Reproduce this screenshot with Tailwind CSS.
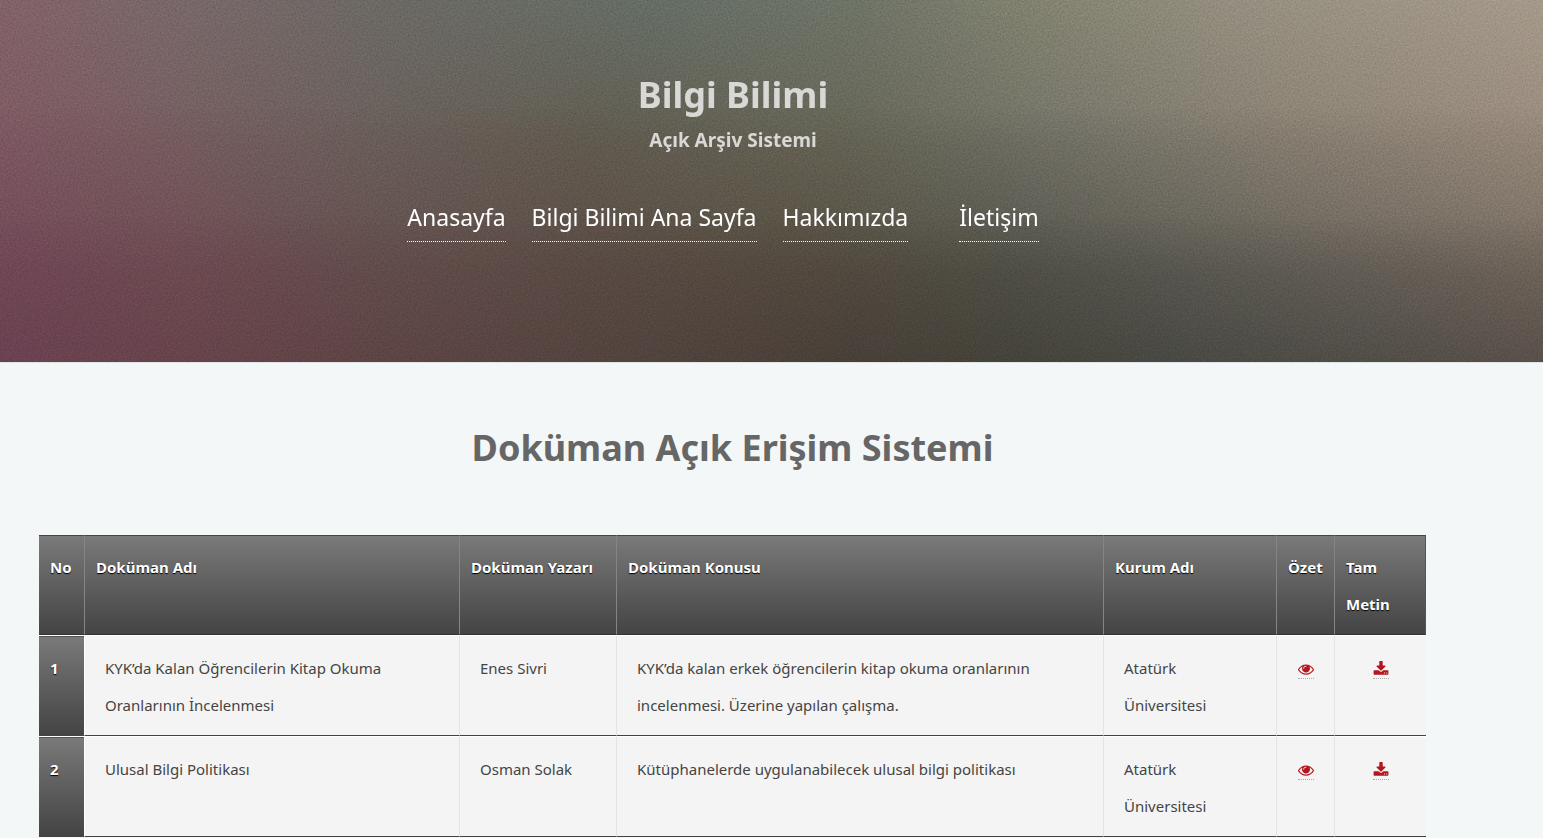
<!DOCTYPE html>
<html lang="tr">
<head>
<meta charset="utf-8">
<meta name="viewport" content="width=device-width, initial-scale=1">
<title>Bilgi Bilimi</title>
<script src="https://cdn.jsdelivr.net/npm/@tailwindcss/browser@4"></script>
</head>
<body class="bg-[#f3f7f8] font-['Noto_Sans','Open_Sans',sans-serif] text-[#444]">
<svg class="hidden" aria-hidden="true">
  <symbol id="eye" viewBox="0 0 1792 1792"><path d="M1664 960q-152-236-381-353 61 104 61 225 0 185-131.5 316.5t-316.5 131.5-316.5-131.5-131.5-316.5q0-121 61-225-229 117-381 353 133 205 333.5 326.5t434.5 121.5 434.5-121.5 333.5-326.5zm-720-384q0-20-14-34t-34-14q-125 0-214.5 89.5t-89.5 214.5q0 20 14 34t34 14 34-14 14-34q0-86 61-147t147-61q20 0 34-14t14-34zm848 384q0 34-20 69-140 230-376.5 368.5t-499.5 138.5-499.5-139-376.5-368q-20-35-20-69t20-69q140-229 376.5-368t499.5-139 499.5 139 376.5 368q20 35 20 69z"/></symbol>
  <symbol id="download" viewBox="0 0 1792 1792"><path d="M1344 1344q0-26-19-45t-45-19-45 19-19 45 19 45 45 19 45-19 19-45zm256 0q0-26-19-45t-45-19-45 19-19 45 19 45 45 19 45-19 19-45zm128-224v320q0 40-28 68t-68 28h-1472q-40 0-68-28t-28-68v-320q0-40 28-68t68-28h465l135 136q58 56 136 56t136-56l136-136h464q40 0 68 28t28 68zm-325-569q17 41-14 70l-448 448q-18 19-45 19t-45-19l-448-448q-31-29-14-70 17-39 59-39h256v-448q0-26 19-45t45-19h256q26 0 45 19t19 45v448h256q42 0 59 39z"/></symbol>
</svg>
<header class="relative isolate border-b border-[#dfe4e4] pt-[70px] pr-[77px] pb-[120px]">
  <!-- Blended horizontal colour bands form the header backdrop -->
  <div aria-hidden="true" class="absolute inset-0 -z-10 bg-[linear-gradient(to_right,#826269_0%,#786869_12%,#6c6964_25%,#656e65_42%,#6f7468_56%,#82826f_67%,#958f80_80%,#a5998a_100%)]"></div>
  <div aria-hidden="true" class="absolute inset-0 -z-10 bg-[linear-gradient(to_right,#7e5a63_0%,#765e60_12%,#6a605b_24%,#625c51_38%,#666657_55%,#75746a_68%,#8a8173_83%,#998b7d_100%)] mask-[linear-gradient(to_bottom,transparent_0%,black_40%)]"></div>
  <div aria-hidden="true" class="absolute inset-0 -z-10 bg-[linear-gradient(to_right,#724957_0%,#6e4d53_12%,#634f4d_25%,#5b4d46_38%,#564d41_52%,#54534a_65%,#5f5d55_77%,#6b645c_87%,#766c60_100%)] mask-[linear-gradient(to_bottom,transparent_30%,black_76%)]"></div>
  <div aria-hidden="true" class="absolute inset-0 -z-10 bg-[linear-gradient(to_right,#6a4151_0%,#67434b_12%,#5d4444_25%,#52433e_40%,#483f38_55%,#444239_65%,#484842_75%,#504d47_88%,#594f4a_100%)] mask-[linear-gradient(to_bottom,transparent_60%,black_100%)]"></div>
  <svg aria-hidden="true" class="absolute inset-0 -z-10 size-full opacity-15 mix-blend-overlay">
    <filter id="grain" color-interpolation-filters="sRGB"><feTurbulence type="fractalNoise" baseFrequency="0.6" numOctaves="2"/><feColorMatrix type="matrix" values="1 0 0 0 0  1 0 0 0 0  1 0 0 0 0  0 0 0 0 1"/></filter>
    <rect width="100%" height="100%" filter="url(#grain)"/>
  </svg>
  <div class="text-center font-bold text-[#d9d8d6]">
    <h1 class="text-[36px] leading-[50px]">Bilgi Bilimi</h1>
    <p class="mt-[4px] text-[19px] leading-[32px]">Açık Arşiv Sistemi</p>
  </div>
  <nav class="mt-[38px] flex justify-center gap-[26px] pr-[20px] text-[23px] leading-[47px] text-white">
    <a href="#" class="border-b border-dotted border-white">Anasayfa</a>
    <a href="#" class="border-b border-dotted border-white">Bilgi Bilimi Ana Sayfa</a>
    <a href="#" class="border-b border-dotted border-white">Hakkımızda</a>
    <a href="#" class="ml-[25px] border-b border-dotted border-white">İletişim</a>
  </nav>
</header>
<main class="pt-[57px] pr-[117px] pl-[39px]">
  <h2 class="text-center text-[36px] leading-[56px] font-bold text-[#666]">Doküman Açık Erişim Sistemi</h2>
  <table class="mt-[59px] w-full table-fixed border-separate border-spacing-0 text-left text-[15px] leading-[37px]">
    <colgroup><col class="w-[46px]"><col class="w-[375px]"><col class="w-[157px]"><col><col class="w-[173px]"><col class="w-[58px]"><col class="w-[91px]"></colgroup>
    <thead>
      <tr class="align-top text-white [text-shadow:0_1px_1px_#000] *:border-t *:border-r *:border-b *:border-t-[#444] *:border-r-[#858585] *:border-b-[#333] *:bg-linear-to-b *:from-[#7a7a7a] *:to-[#444] *:px-[11px] *:pt-[13px] *:pb-[11px] *:font-bold *:last:border-r-[#555]">
        <th scope="col">No</th><th scope="col">Doküman Adı</th><th scope="col">Doküman Yazarı</th><th scope="col">Doküman Konusu</th><th scope="col">Kurum Adı</th><th scope="col">Özet</th><th scope="col">Tam Metin</th>
      </tr>
    </thead>
    <tbody>
      <tr class="align-top *:h-[101px] *:border-t *:border-b *:border-t-white *:border-b-[#444] *:pt-[14px] *:pb-[11px]">
        <th scope="row" class="border-r border-r-white bg-linear-to-b from-[#7a7a7a] to-[#444] bg-clip-padding pl-[11px] text-white [text-shadow:0_1px_1px_#000] shadow-[inset_0_1px_0_#555]">1</th>
        <td class="border-r border-r-[#e3e3e3] bg-[#f4f4f4] px-[20px]">KYK’da Kalan Öğrencilerin Kitap Okuma Oranlarının İncelenmesi</td>
        <td class="border-r border-r-[#e3e3e3] bg-[#f4f4f4] px-[20px]">Enes Sivri</td>
        <td class="border-r border-r-[#e3e3e3] bg-[#f4f4f4] px-[20px]">KYK’da kalan erkek öğrencilerin kitap okuma oranlarının incelenmesi. Üzerine yapılan çalışma.</td>
        <td class="border-r border-r-[#e3e3e3] bg-[#f4f4f4] px-[20px]">Atatürk Üniversitesi</td>
        <td class="border-r border-r-[#e3e3e3] bg-[#f4f4f4] text-center"><a href="#" aria-label="Özet" class="mt-[11px] inline-block border-b border-dotted border-[#aaa] pb-px align-top text-[#b5161d]"><svg class="block size-4 fill-current"><use href="#eye"/></svg></a></td>
        <td class="bg-[#f4f4f4] text-center"><a href="#" aria-label="Tam Metin" class="mt-[11px] inline-block border-b border-dotted border-[#aaa] pb-px align-top text-[#b5161d]"><svg class="block size-4 fill-current"><use href="#download"/></svg></a></td>
      </tr>
      <tr class="align-top *:h-[101px] *:border-t *:border-b *:border-t-white *:border-b-[#444] *:pt-[14px] *:pb-[11px]">
        <th scope="row" class="border-r border-r-white bg-linear-to-b from-[#7a7a7a] to-[#444] bg-clip-padding pl-[11px] text-white [text-shadow:0_1px_1px_#000] shadow-[inset_0_1px_0_#555]">2</th>
        <td class="border-r border-r-[#e3e3e3] bg-[#f4f4f4] px-[20px]">Ulusal Bilgi Politikası</td>
        <td class="border-r border-r-[#e3e3e3] bg-[#f4f4f4] px-[20px]">Osman Solak</td>
        <td class="border-r border-r-[#e3e3e3] bg-[#f4f4f4] px-[20px]">Kütüphanelerde uygulanabilecek ulusal bilgi politikası</td>
        <td class="border-r border-r-[#e3e3e3] bg-[#f4f4f4] px-[20px]">Atatürk Üniversitesi</td>
        <td class="border-r border-r-[#e3e3e3] bg-[#f4f4f4] text-center"><a href="#" aria-label="Özet" class="mt-[11px] inline-block border-b border-dotted border-[#aaa] pb-px align-top text-[#b5161d]"><svg class="block size-4 fill-current"><use href="#eye"/></svg></a></td>
        <td class="bg-[#f4f4f4] text-center"><a href="#" aria-label="Tam Metin" class="mt-[11px] inline-block border-b border-dotted border-[#aaa] pb-px align-top text-[#b5161d]"><svg class="block size-4 fill-current"><use href="#download"/></svg></a></td>
      </tr>
    </tbody>
  </table>
</main>
</body>
</html>
